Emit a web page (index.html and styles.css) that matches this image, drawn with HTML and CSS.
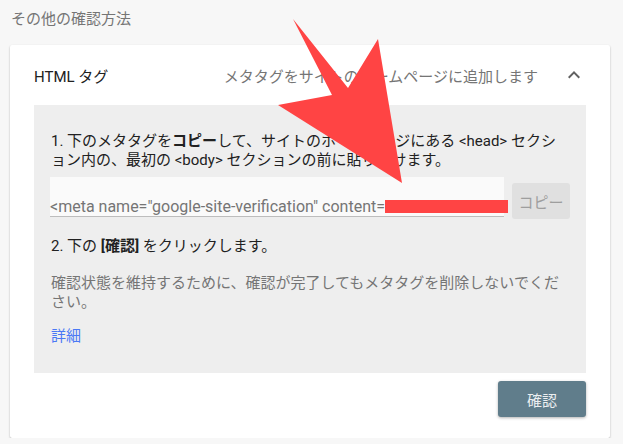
FILE: index.html
```html
<!DOCTYPE html>
<html lang="ja">
<head>
  <meta charset="UTF-8">
  <meta name="viewport" content="width=device-width, initial-scale=1.0">
  <title>その他の確認方法</title>
  <link rel="stylesheet" href="styles.css">
</head>
<body>
  <div class="page">
    <h2 class="section-title">その他の確認方法</h2>
    <div class="card">
      <div class="card-header">
        <span class="card-title">HTML タグ</span>
        <span class="card-desc">メタタグをサイトのホームページに追加します</span>
        <svg class="chevron" viewBox="0 0 24 24"><path d="M12 8l-6 6 1.41 1.41L12 10.83l4.59 4.58L18 14z"/></svg>
      </div>
      <div class="steps">
        <p class="step">1. 下のメタタグを<b>コピー</b>して、サイトのホームページにある &lt;head&gt; セクション内の、最初の &lt;body&gt; セクションの前に貼り付けます。</p>
        <div class="meta-row">
          <div class="meta-field">&lt;meta name="google-site-verification" content=<span class="redact"></span></div>
          <button class="copy-btn">コピー</button>
        </div>
        <p class="step step-two">2. 下の <b>[確認]</b> をクリックします。</p>
        <p class="note">確認状態を維持するために、確認が完了してもメタタグを削除しないでください。</p>
        <a class="more" href="#">詳細</a>
      </div>
      <div class="card-actions">
        <button class="verify-btn">確認</button>
      </div>
    </div>
  </div>
  <svg class="arrow" viewBox="0 0 623 444">
    <polygon points="293,19 348,88 378,39 402,183 278,105 332,95"/>
  </svg>
</body>
</html>
```

FILE: styles.css
```css
body {
  background-color: #f7f7f7;
  color: #212121;
  font-family: Roboto, "Noto Sans CJK JP", sans-serif;
  font-size: 15px;
  margin: 0;
  padding: 0;
  position: relative;
}

.page {
  padding: 0 13px 0 10px;
}

.section-title {
  margin: 0;
  padding: 9px 0 0 1px;
  font-size: 15px;
  font-weight: 400;
  line-height: 20px;
  color: #757575;
}

.card {
  margin-top: 16px;
  background-color: #ffffff;
  border-radius: 2px;
  box-shadow: 0 1px 2px rgba(0, 0, 0, 0.3);
  padding: 0 24px 21px;
}

.card-header {
  display: flex;
  align-items: center;
  height: 60px;
}

.card-title {
  color: #212121;
}

.card-desc {
  margin-left: auto;
  color: #757575;
}

.chevron {
  width: 24px;
  height: 24px;
  margin-left: 24px;
  fill: #616161;
}

.steps {
  background-color: #eeeeee;
  padding: 27px 16px 27px;
}

.step, .note {
  margin: 0;
  padding-left: 1px;
  line-height: 19px;
  line-break: normal;
}

.step b {
  font-weight: 700;
}

.meta-row {
  display: flex;
  align-items: flex-start;
  gap: 8px;
  margin-top: 7px;
}

.meta-field {
  flex: 1;
  min-width: 0;
  height: 40px;
  box-sizing: border-box;
  padding-top: 20px;
  font-size: 16px;
  line-height: 19px;
  white-space: nowrap;
  background-color: #fafafa;
  border-bottom: 1px solid #bdbdbd;
  color: #757575;
}

.redact {
  display: inline-block;
  width: 123px;
  height: 13px;
  vertical-align: -1px;
  background-color: #ff4444;
}

.copy-btn {
  flex-shrink: 0;
  width: 58px;
  height: 36px;
  margin-top: 6px;
  padding: 0;
  border: none;
  border-radius: 3px;
  background-color: #e0e0e0;
  color: #9e9e9e;
  font-family: inherit;
  font-size: 15px;
}

.step-two {
  margin-top: 18px;
}

.note {
  margin-top: 18px;
  color: #757575;
}

.more {
  display: block;
  margin-top: 15px;
  line-height: 19px;
  padding-left: 1px;
  color: #4a78f5;
  text-decoration: none;
}

.card-actions {
  display: flex;
  justify-content: flex-end;
  padding-top: 8px;
}

.verify-btn {
  width: 88px;
  height: 36px;
  border: none;
  border-radius: 3px;
  background-color: #607d8b;
  color: #eceff1;
  font-family: inherit;
  font-size: 15px;
  box-shadow: 0 1px 3px rgba(0, 0, 0, 0.3);
}

.arrow {
  position: absolute;
  top: 0;
  left: 0;
  width: 623px;
  height: 444px;
  pointer-events: none;
  fill: #ff4444;
}
```
